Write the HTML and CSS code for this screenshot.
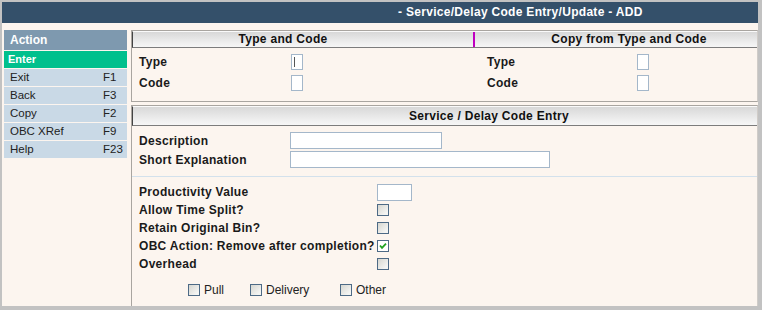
FILE: index.html
```html
<!DOCTYPE html>
<html lang="en">
<head>
    <meta charset="UTF-8">
    <title>Service/Delay Code Entry/Update - ADD</title>
    <link rel="stylesheet" href="styles.css">
</head>
<body>
    <div class="screen">
        <div class="titlebar">- Service/Delay Code Entry/Update - ADD</div>

        <div class="content">
            <div class="sidebar">
                <div class="side-head">Action</div>
                <div class="side-enter">Enter</div>
                <div class="side-row"><span>Exit</span><span class="key">F1</span></div>
                <div class="side-row"><span>Back</span><span class="key">F3</span></div>
                <div class="side-row"><span>Copy</span><span class="key">F2</span></div>
                <div class="side-row"><span>OBC XRef</span><span class="key">F9</span></div>
                <div class="side-row"><span>Help</span><span class="key">F23</span></div>
            </div>

            <div class="main">
                <div class="section type-code">
                    <div class="sec-head split">
                        <div class="head-left">Type and Code</div>
                        <div class="head-right">Copy from Type and Code</div>
                    </div>
                    <div class="split-body">
                        <div class="half left">
                            <div class="row"><span class="lbl w152">Type</span><input class="tiny caret" type="text"></div>
                            <div class="row"><span class="lbl w152">Code</span><input class="tiny" type="text"></div>
                        </div>
                        <div class="half right">
                            <div class="row"><span class="lbl w150">Type</span><input class="tiny" type="text"></div>
                            <div class="row"><span class="lbl w150">Code</span><input class="tiny" type="text"></div>
                        </div>
                    </div>
                </div>

                <div class="section entry">
                    <div class="sec-head single">Service / Delay Code Entry</div>
                    <div class="entry-top">
                        <div class="row r17"><span class="lbl w151">Description</span><input class="txt desc" type="text"></div>
                        <div class="row r17"><span class="lbl w151">Short Explanation</span><input class="txt short" type="text"></div>
                    </div>
                    <div class="entry-bottom">
                        <div class="row r18"><span class="lbl w238">Productivity Value</span><input class="txt prod" type="text"></div>
                        <div class="row r18"><span class="lbl w238">Allow Time Split?</span><span class="cb"></span></div>
                        <div class="row r18"><span class="lbl w238">Retain Original Bin?</span><span class="cb"></span></div>
                        <div class="row r18"><span class="lbl w238">OBC Action: Remove after completion?</span><span class="cb checked"><svg width="10" height="10" viewBox="0 0 10 10"><path d="M2 4.5 L4 6.8 L8 2.6" fill="none" stroke="#21a321" stroke-width="1.8"/></svg></span></div>
                        <div class="row r18"><span class="lbl w238">Overhead</span><span class="cb"></span></div>
                        <div class="opts">
                            <span class="opt w62"><span class="cb"></span>Pull</span>
                            <span class="opt w90"><span class="cb"></span>Delivery</span>
                            <span class="opt"><span class="cb"></span>Other</span>
                        </div>
                    </div>
                </div>
            </div>
        </div>
    </div>
</body>
</html>
```

FILE: styles.css
```css
body {
    margin: 0;
    background-color: #c2c2c2;
    font-family: "Liberation Sans", Arial, sans-serif;
    color: #111;
}
.screen {
    margin: 2px 4px 0 2px;
    height: 304px;
    background-color: #fcf5ef;
    overflow: hidden;
}
.titlebar {
    height: 21px;
    line-height: 21px;
    background-color: #34506a;
    color: #fff;
    font-size: 12px;
    font-weight: bold;
    letter-spacing: 0.3px;
    padding-left: 396px;
}
.content {
    display: flex;
    gap: 4px;
    margin-top: 7px;
    padding-left: 2px;
}

/* action menu */
.sidebar {
    width: 123px;
    flex: none;
}
.side-head {
    height: 20px;
    line-height: 20px;
    background-color: #7e99af;
    color: #fff;
    font-size: 12px;
    font-weight: bold;
    padding-left: 6px;
    margin-bottom: 1px;
}
.side-enter {
    height: 17px;
    line-height: 17px;
    background-color: #00c08d;
    color: #fff;
    font-size: 11px;
    font-weight: bold;
    padding-left: 4px;
    border-bottom: 1px solid #fcf5ef;
}
.side-row {
    display: flex;
    height: 17px;
    line-height: 17px;
    background-color: #c9d9e6;
    font-size: 11.5px;
    color: #222;
    padding-left: 6px;
    border-bottom: 1px solid #fcf5ef;
}
.side-row span:first-child {
    width: 93px;
}

/* sections */
.main {
    flex: 1;
}
.section {
    border: 1px solid #a9a5a0;
    border-right-color: #d0ccc8;
}
.sec-head {
    height: 15px;
    line-height: 15px;
    background: linear-gradient(#d8d8d8, #eeeeee 70%, #f6f6f6);
    border-top: 1px solid #fafafa;
    border-bottom: 1px solid #7c7c7c;
    border-left: 1px solid #444;
    font-size: 12px;
    font-weight: bold;
    letter-spacing: 0.3px;
    color: #111;
}
.split {
    display: flex;
}
.head-left {
    width: 342px;
    padding-right: 40px;
    box-sizing: border-box;
    text-align: center;
    border-right: 2px solid #c000c0;
}
.head-right {
    flex: 1;
    text-align: center;
    padding-left: 26px;
}
.split-body {
    display: flex;
    padding: 4px 0 7px;
}
.half.left {
    width: 344px;
    padding-left: 7px;
    box-sizing: border-box;
}
.half.right {
    padding-left: 11px;
}
.row {
    display: flex;
    align-items: center;
    height: 20px;
    margin-bottom: 1px;
}
.lbl {
    font-size: 12px;
    font-weight: bold;
    letter-spacing: 0.3px;
    color: #1a1a1a;
    flex: none;
}
.w150 { width: 150px; }
.w151 { width: 151px; }
.w152 { width: 152px; }
.w238 { width: 238px; }

input {
    box-sizing: border-box;
    margin: 0;
    padding: 0;
    border: 1px solid #a4b7ca;
    background-color: #fff;
    font-size: 11px;
}
.tiny {
    width: 12px;
    height: 16px;
}
.caret {
    background: linear-gradient(#555, #555) no-repeat 2px 2px / 1px 10px, #fff;
}

.section.entry {
    margin-top: 3px;
}
.single {
    height: 18px;
    line-height: 18px;
    padding-left: 276px;
}
.entry-top {
    padding: 6px 0 6px 7px;
    border-bottom: 1px solid #d3e1ec;
}
.row.r17 {
    height: 17px;
    margin-bottom: 2px;
}
.txt {
    height: 17px;
}
.desc { width: 152px; }
.short { width: 260px; }
.prod {
    width: 35px;
    height: 17px;
}
.entry-bottom {
    padding: 6px 0 8px 7px;
}
.row.r18 {
    height: 18px;
    margin-bottom: 0;
}

/* check boxes */
.cb {
    display: inline-flex;
    align-items: center;
    justify-content: center;
    width: 12px;
    height: 12px;
    box-sizing: border-box;
    border: 1px solid #4d6a86;
    background: linear-gradient(135deg, #d6d6d0, #f4f4f2 80%);
    flex: none;
}
.cb.checked {
    background: #fff;
}
.opts {
    display: flex;
    align-items: center;
    height: 18px;
    margin-top: 8px;
    padding-left: 49px;
}
.opt {
    display: inline-flex;
    align-items: center;
    gap: 4px;
    font-size: 12px;
    color: #222;
}
.w62 { width: 62px; }
.w90 { width: 90px; }
```
